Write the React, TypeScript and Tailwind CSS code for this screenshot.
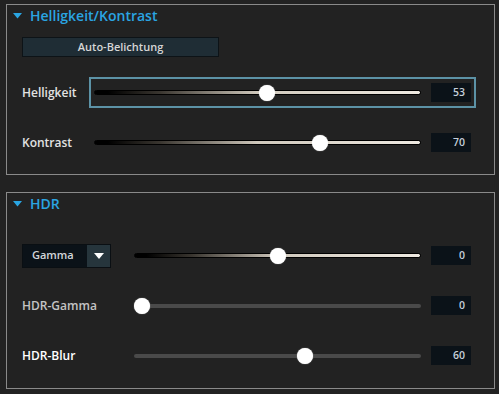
import React from "react";

const FONT = { fontFamily: '"Open Sans", "Noto Sans", sans-serif' };

function Header({ title }: { title: string }) {
  return (
    <div className="flex items-center h-[21px] pl-[6px] gap-[8px]">
      <svg width="9" height="6" viewBox="0 0 9 6" className="mt-[1px]">
        <polygon points="0,0 9,0 4.5,5.5" fill="#2aa5e2" />
      </svg>
      <span className="text-[14px] font-semibold text-[#2aa5e2] leading-none">{title}</span>
    </div>
  );
}

function Track({ value, gradient, width }: { value: number; gradient: boolean; width: number }) {
  return (
    <div className="relative flex items-center h-[20px]" style={{ width }}>
      {gradient ? (
        <div className="w-full h-[5px] rounded-full border border-black bg-[linear-gradient(to_right,#000_4%,#3a3630_20%,#cfc8bc_50%,#eee9e1_100%)]" />
      ) : (
        <div className="w-full h-[4px] rounded-full bg-[#4a4a4a]" />
      )}
      <div
        className="absolute top-1/2 w-[16px] h-[16px] -mt-[8px] -ml-[8px] rounded-full bg-white shadow-[0_0_1px_rgba(255,255,255,0.8)]"
        style={{ left: `calc(8px + ${value / 100} * (100% - 16px))` }}
      />
    </div>
  );
}

function ValueBox({ v }: { v: string }) {
  return (
    <div className="w-[40px] h-[19px] bg-[#0b1218] flex items-center justify-end pr-[6px] text-[10.5px] font-semibold text-[#c6d0da]">
      {v}
    </div>
  );
}

function Row({
  label,
  labelW,
  trackW,
  value,
  pos,
  gradient,
  focused,
  labelClass,
}: {
  label: React.ReactNode;
  labelW: number;
  trackW: number;
  value: string;
  pos: number;
  gradient: boolean;
  focused?: boolean;
  labelClass?: string;
}) {
  return (
    <div className="flex items-center">
      <div className="flex items-center" style={{ width: labelW }}>
        {typeof label === "string" ? (
          <span className={`text-[12px] font-semibold ${labelClass ?? "text-[#e2e2e2]"}`}>{label}</span>
        ) : (
          label
        )}
      </div>
      <div
        className={`flex items-center h-[31px] px-[3px] gap-[10px] border-2 ${
          focused ? "border-[#5c92a6]" : "border-transparent"
        }`}
      >
        <Track value={pos} gradient={gradient} width={trackW} />
        <ValueBox v={value} />
      </div>
    </div>
  );
}

function Dropdown() {
  return (
    <div className="flex h-[24px] w-[89px] bg-[#0b1218] border border-[#0a0f13]">
      <div className="flex-1 flex items-center pl-[9px] text-[11px] font-semibold text-[#d2d6da]">Gamma</div>
      <div className="w-[23px] bg-[#26353c] flex items-center justify-center">
        <svg width="10" height="6" viewBox="0 0 10 6">
          <polygon points="0,0 10,0 5,6" fill="#ffffff" />
        </svg>
      </div>
    </div>
  );
}

export default function App() {
  return (
    <div className="w-[499px] h-[394px] bg-[#222222] pt-[4px] pl-[6px] pr-[4px]" style={FONT}>
      <div className="border border-[#8a8a8a] pb-[16px]">
        <Header title="Helligkeit/Kontrast" />
        <div className="pl-[15px] flex flex-col">
          <button className="mt-[11px] w-[197px] h-[20px] bg-[#1f2d35] border border-[#0d1317] text-[11px] font-semibold text-[#d6d6d6] flex items-center justify-center">
            Auto-Belichtung
          </button>
          <div className="mt-[20px] flex flex-col gap-[19px]">
            <Row label="Helligkeit" labelW={67} trackW={327} value="53" pos={53} gradient focused />
            <Row label="Kontrast" labelW={67} trackW={327} value="70" pos={70} gradient />
          </div>
        </div>
      </div>
      <div className="mt-[17px] border border-[#8a8a8a] pb-[17px]">
        <Header title="HDR" />
        <div className="pl-[15px] mt-[26px] flex flex-col gap-[19px]">
          <Row label={<Dropdown />} labelW={107} trackW={287} value="0" pos={50} gradient />
          <Row label="HDR-Gamma" labelW={107} trackW={287} value="0" pos={0} gradient={false} labelClass="text-[#c4c4c4]" />
          <Row label="HDR-Blur" labelW={107} trackW={287} value="60" pos={60} gradient={false} labelClass="text-white font-bold" />
        </div>
      </div>
    </div>
  );
}
